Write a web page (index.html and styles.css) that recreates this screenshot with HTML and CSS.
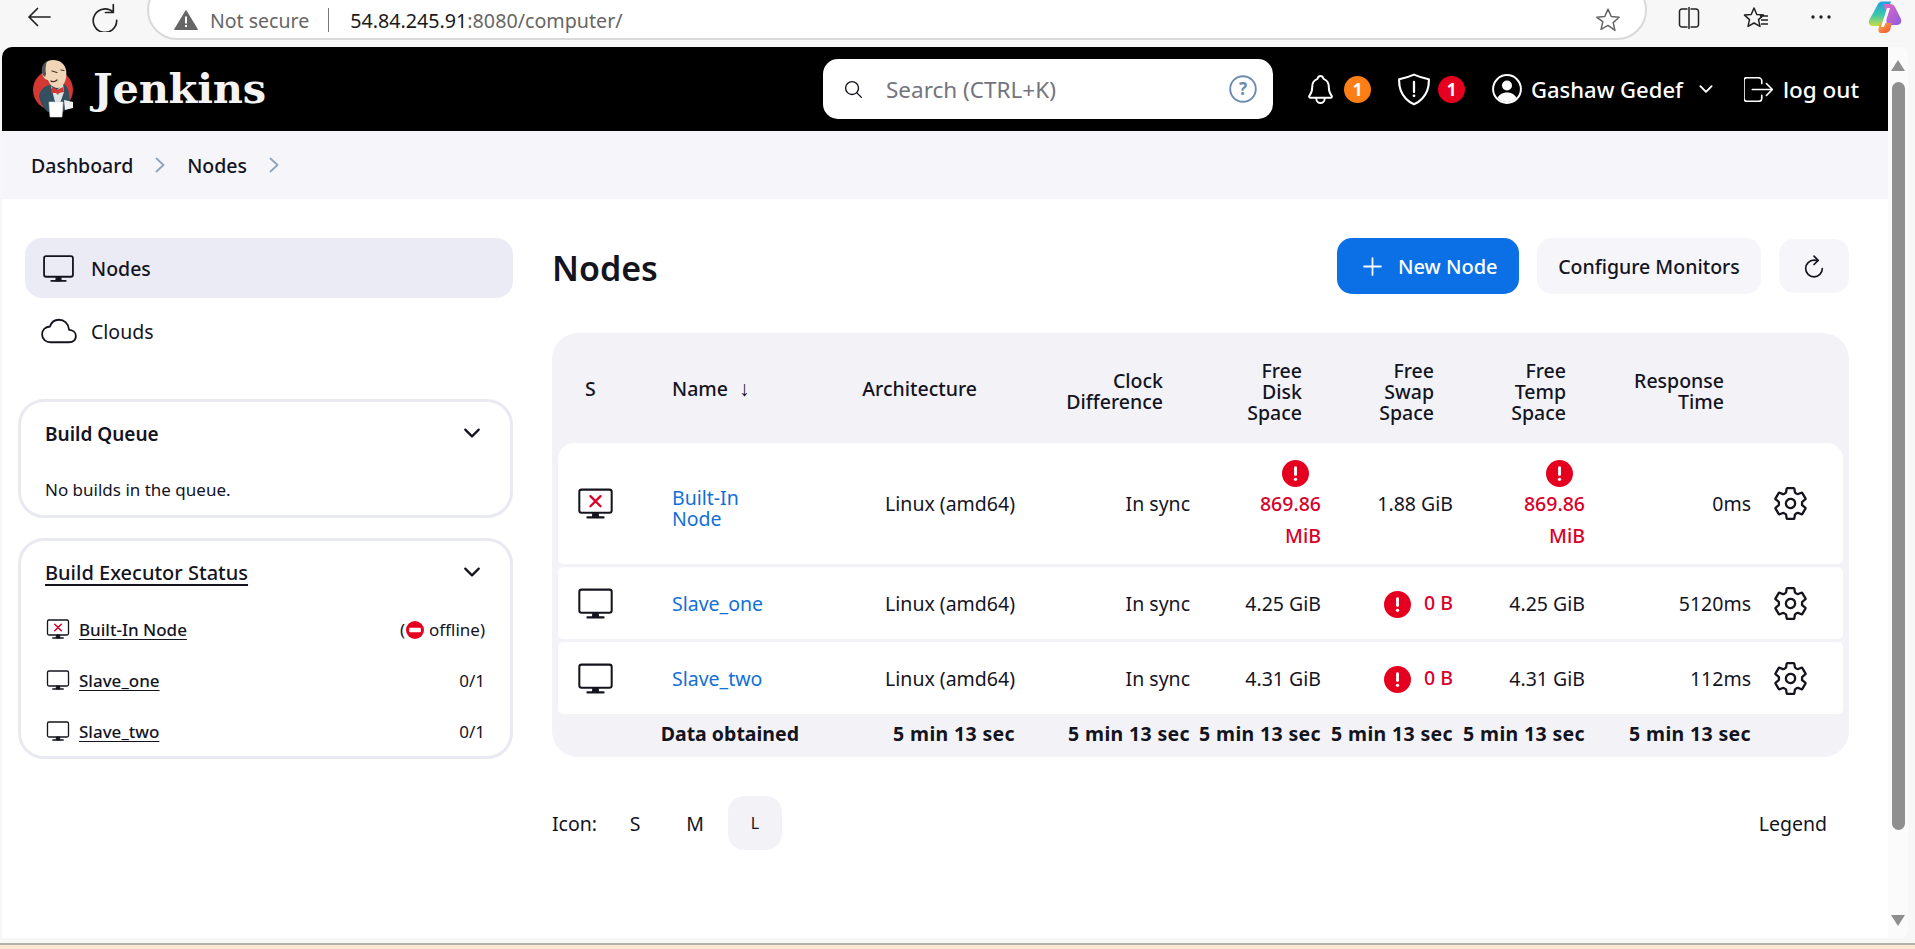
FILE: index.html
```html
<!DOCTYPE html>
<html lang="en">
<head>
<meta charset="utf-8">
<title>Nodes - Jenkins</title>
<link rel="stylesheet" href="styles.css">
</head>
<body>
<svg class="defs" aria-hidden="true">
  <symbol id="monitor" viewBox="0 0 512 512"><rect x="32" y="64" width="448" height="320" rx="32" ry="32" fill="none" stroke="currentColor" stroke-width="28" stroke-linejoin="round"/><path d="M296 448l-6-64h-68l-6 64h80z" fill="currentColor" stroke="currentColor" stroke-width="20" stroke-linejoin="round"/><path d="M368 448H144" fill="none" stroke="currentColor" stroke-width="28" stroke-linecap="round"/></symbol>
  <symbol id="monitor-x" viewBox="0 0 512 512"><rect x="32" y="64" width="448" height="320" rx="32" ry="32" fill="none" stroke="currentColor" stroke-width="28" stroke-linejoin="round"/><path d="M296 448l-6-64h-68l-6 64h80z" fill="currentColor" stroke="currentColor" stroke-width="20" stroke-linejoin="round"/><path d="M368 448H144" fill="none" stroke="currentColor" stroke-width="28" stroke-linecap="round"/><path d="M186 154l140 140M326 154L186 294" fill="none" stroke="#d8002a" stroke-width="32" stroke-linecap="round"/></symbol>
  <symbol id="gear" viewBox="0 0 512 512"><path fill="none" stroke="currentColor" stroke-width="32" stroke-linecap="round" stroke-linejoin="round" d="M262.29 192.31a64 64 0 1057.4 57.4 64.13 64.13 0 00-57.4-57.4zM416.39 256a154.34 154.34 0 01-1.53 20.79l45.21 35.46a10.81 10.81 0 012.45 13.75l-42.77 74a10.81 10.81 0 01-13.14 4.59l-44.9-18.08a16.11 16.11 0 00-15.17 1.75A164.48 164.48 0 01325 400.8a15.94 15.94 0 00-8.82 12.14l-6.73 47.89a11.08 11.08 0 01-10.68 9.17h-85.54a11.11 11.11 0 01-10.69-8.87l-6.72-47.82a16.07 16.07 0 00-9-12.22 155.3 155.3 0 01-21.46-12.57 16 16 0 00-15.11-1.71l-44.89 18.07a10.81 10.81 0 01-13.14-4.58l-42.77-74a10.8 10.8 0 012.45-13.75l38.21-30a16.05 16.05 0 006-14.08c-.36-4.17-.58-8.33-.58-12.5s.21-8.27.58-12.35a16 16 0 00-6.07-13.94l-38.19-30A10.81 10.81 0 0149.48 186l42.77-74a10.81 10.81 0 0113.14-4.59l44.9 18.08a16.11 16.11 0 0015.17-1.75A164.48 164.48 0 01187 111.2a15.94 15.94 0 008.82-12.14l6.73-47.89A11.08 11.08 0 01213.23 42h85.54a11.11 11.11 0 0110.69 8.87l6.72 47.82a16.07 16.07 0 009 12.22 155.3 155.3 0 0121.46 12.57 16 16 0 0015.11 1.71l44.89-18.07a10.81 10.81 0 0113.14 4.58l42.77 74a10.8 10.8 0 01-2.45 13.75l-38.21 30a16.05 16.05 0 00-6.05 14.08c.33 4.14.55 8.3.55 12.47z"/></symbol>
  <symbol id="warn" viewBox="0 0 28 28"><circle cx="14" cy="14" r="14" fill="#e6001f"/><rect x="12.5" y="6.5" width="3" height="10" rx="1.5" fill="#fff"/><circle cx="14" cy="20" r="1.7" fill="#fff"/></symbol>
  <symbol id="chev-down" viewBox="0 0 512 512"><path d="M112 184l144 144 144-144" fill="none" stroke="currentColor" stroke-width="48" stroke-linecap="round" stroke-linejoin="round"/></symbol>
  <symbol id="chev-right" viewBox="0 0 10 16"><path d="M1.5 1.5L8.5 8l-7 6.5" fill="none" stroke="currentColor" stroke-width="1.8" stroke-linecap="round" stroke-linejoin="round"/></symbol>
</svg>

<div class="chrome">
  <svg class="c-back" viewBox="0 0 24 20"><path d="M23 10H2M10.5 1.5L2 10l8.5 8.5" fill="none" stroke="#222" stroke-width="1.7" stroke-linecap="round" stroke-linejoin="round"/></svg>
  <svg class="c-reload" viewBox="0 0 26 26"><path d="M20 1.500v7h-7M20 8.500a10.500 10.500 0 1 0 3 7" fill="none" stroke="#222" stroke-width="1.500" stroke-linecap="round" stroke-linejoin="round"/></svg>
  <div class="address">
    <svg class="a-warn" viewBox="0 0 24 20"><path d="M12 .5L23.5 19.5H.5z" fill="#666" stroke="#666" stroke-linejoin="round"/><rect x="11" y="6.5" width="2" height="7" fill="#fff"/><rect x="11" y="15" width="2" height="2" fill="#fff"/></svg>
    <span class="a-note">Not secure</span>
    <span class="a-sep"></span>
    <span class="a-url">54.84.245.91<span class="a-path">:8080/computer/</span></span>
    <svg class="a-star" viewBox="0 0 24 24"><path d="M12 2l3 6.8 7.3.7-5.5 4.9 1.6 7.2L12 17l-6.4 3.600 1.600-7.200L1.700 9.500 9 8.800z" fill="none" stroke="#666" stroke-width="1.400" stroke-linejoin="round"/></svg>
  </div>
  <svg class="c-split" viewBox="0 0 24 24"><path d="M10.500 3H5a2.500 2.500 0 0 0-2.500 2.500v13A2.500 2.500 0 0 0 5 21h5.500M13.500 3H19a2.500 2.500 0 0 1 2.500 2.500v13A2.500 2.500 0 0 1 19 21h-5.500M12 1v22" fill="none" stroke="#222" stroke-width="1.500"/></svg>
  <svg class="c-fav" viewBox="0 0 26 24"><path d="M11 2l2.800 6.500 6.700.6-5 4.500 1.500 6.800L11 17l-6 3.400 1.500-6.800-5-4.500 6.700-.6zM17 10h8M18 14h7M18 18h7" fill="none" stroke="#222" stroke-width="1.500" stroke-linejoin="round"/></svg>
  <svg class="c-dots" viewBox="0 0 20 4"><circle cx="2" cy="2" r="1.700" fill="#222"/><circle cx="10" cy="2" r="1.700" fill="#222"/><circle cx="18" cy="2" r="1.700" fill="#222"/></svg>
  <svg class="c-copilot" viewBox="0 0 34 32">
    <defs>
      <linearGradient id="cpa" x1="0" y1="0" x2="0" y2="1"><stop offset="0" stop-color="#1f9fe8"/><stop offset=".55" stop-color="#3cc7a8"/><stop offset="1" stop-color="#c8dc46"/></linearGradient>
      <linearGradient id="cpb" x1="0" y1="0" x2="1" y2="1"><stop offset="0" stop-color="#e868c0"/><stop offset="1" stop-color="#8a5ce0"/></linearGradient>
      <linearGradient id="cpc" x1="0" y1="0" x2="1" y2="1"><stop offset="0" stop-color="#f9b53c"/><stop offset="1" stop-color="#f0483c"/></linearGradient>
    </defs>
    <path d="M10 3c1-2 3-2.500 5-2.500h8l-7 22c-.5 1.500-2 2.500-4 2.500H5c-3 0-5-2.500-4-5.500z" fill="url(#cpa)"/>
    <path d="M16 3h6c2.500 0 4 1 5 3l6 12c1 3-1 6-4 6h-10z" fill="url(#cpb)"/>
    <path d="M12 22h12l-2 7c-1 2-3 3-5 3h-4c-2 0-3-2-2.500-4z" fill="url(#cpc)"/>
    <path d="M22 7h-3l-6 19h3z" fill="#fff"/>
  </svg>
</div>

<div class="window">
  <div class="page">
    <header class="topbar">
      <svg class="logo" viewBox="0 0 41 58">
        <circle cx="20" cy="30" r="20" fill="#d33833"/>
        <path d="M6 36c1-6 5-10 11-11l14-1c3 2 5 6 5 11l1 6-4 8-3 3H15c-5-4-8-10-9-16z" fill="#335061"/>
        <path d="M18 26l5 5 7-7 1 8-5 14h-3z" fill="#dfe3e6"/>
        <path d="M19 27l5 3 6-3 1 5-5 1-1 2-2-2h-5z" fill="#d33833"/>
        <path d="M9 11C9 4 14 0 20 0c7 0 12 4 13 10 1 5 0 11-3 15-2 3-6 4-9 2-3-1-5-4-6-7-3 0-6-4-6-9z" fill="#f0d6b7"/>
        <path d="M9 13c-1-5 1-9 5-12-1 3-2 8-1 13l-1 3c-1-1-2-2-3-4z" fill="#4f5358"/>
        <path d="M19 11l5 1.500M28 10l3 .5M24 20c-2 2-5 2-6 1" fill="none" stroke="#49352a" stroke-width="1.200" stroke-linecap="round"/>
        <path d="M16 42h14l-1 15H17z" fill="#fff" stroke="#dcdcdc" stroke-width=".6"/>
        <path d="M31 40l9 2v6l-8 2z" fill="#f0f0f0"/>
      </svg>
      <span class="brand">Jenkins</span>
      <div class="search">
        <svg class="search-icon" viewBox="0 0 512 512"><path d="M221.090 64a157.090 157.090 0 10157.090 157.090A157.100 157.100 0 00221.090 64z" fill="none" stroke="#14141f" stroke-width="34"/><path d="M338.290 338.290L448 448" fill="none" stroke="#14141f" stroke-width="34" stroke-linecap="round"/></svg>
        <span class="search-text">Search (CTRL+K)</span>
        <svg class="help-icon" viewBox="0 0 28 28"><circle cx="14" cy="14" r="12.800" fill="none" stroke="#6b8cb0" stroke-width="1.900"/><text x="14" y="20" text-anchor="middle" class="help-q">?</text></svg>
      </div>
      <svg class="bell" viewBox="48 32 416 448"><path d="M427.680 351.430C402 320 383.870 304 383.870 217.350 383.870 138 343.350 109.730 310 96c-4.430-1.820-8.600-6-9.950-10.550C294.200 65.540 277.800 48 256 48s-38.210 17.550-44 37.470c-1.350 4.600-5.520 8.710-9.950 10.530-33.390 13.750-73.870 41.920-73.870 121.350C128.130 304 110 320 84.320 351.430 73.680 364.450 83 384 101.610 384h308.880c18.510 0 27.770-19.610 17.190-32.570zM320 384v16a64 64 0 01-128 0v-16" fill="none" stroke="#fff" stroke-width="30" stroke-linecap="round" stroke-linejoin="round"/></svg>
      <span class="badge badge-orange">1</span>
      <svg class="shield" viewBox="32 32 448 448"><path d="M463.100 112.370C373.680 96.330 336.710 84.450 256 48c-80.710 36.450-117.680 48.330-207.100 64.370C32.700 369.130 240.580 457.790 256 464c15.420-6.210 223.300-94.870 207.100-351.630z" fill="none" stroke="#fff" stroke-width="30" stroke-linejoin="round"/><path d="M256 150v140" stroke="#fff" stroke-width="32" stroke-linecap="round"/><circle cx="256" cy="345" r="20" fill="#fff"/></svg>
      <span class="badge badge-red">1</span>
      <svg class="user-icon" viewBox="0 0 30 30"><circle cx="15" cy="15" r="13.900" fill="none" stroke="#fff" stroke-width="2"/><circle cx="15" cy="11.500" r="5" fill="#fff"/><path d="M5.500 24c2-4 5.500-5.500 9.500-5.500s7.500 1.500 9.500 5.500c-2.500 2.500-6 4-9.500 4s-7-1.500-9.500-4z" fill="#fff"/></svg>
      <span class="user-name">Gashaw Gedef</span>
      <svg class="user-chev"><use href="#chev-down"/></svg>
      <svg class="logout-icon" viewBox="64 96 392 320"><path d="M304 336v40a40 40 0 01-40 40H104a40 40 0 01-40-40V136a40 40 0 0140-40h152c22.090 0 48 17.910 48 40v40M368 336l80-80-80-80M176 256h256" fill="none" stroke="#fff" stroke-width="22" stroke-linecap="round" stroke-linejoin="round"/></svg>
      <span class="logout-text">log out</span>
    </header>

    <nav class="crumbs">
      <span class="crumb">Dashboard</span>
      <svg class="crumb-sep"><use href="#chev-right"/></svg>
      <span class="crumb">Nodes</span>
      <svg class="crumb-sep"><use href="#chev-right"/></svg>
    </nav>

    <div class="layout">
      <aside class="side">
        <div class="side-item side-item-active">
          <svg class="side-icon"><use href="#monitor"/></svg><span>Nodes</span>
        </div>
        <div class="side-item">
          <svg class="side-icon side-icon-cloud" viewBox="0 0 512 512"><path d="M400 240c-8.890-89.540-71-144-144-144-69 0-113.440 48.200-128 96C68 198 16 235.590 16 304c0 66 54 112 120 112h260c55 0 100-27.440 100-88 0-59.820-53-85.760-96-88z" fill="none" stroke="currentColor" stroke-width="26" stroke-linejoin="round"/></svg><span>Clouds</span>
        </div>

        <section class="card card-queue">
          <div class="card-head"><span class="card-title">Build Queue</span><svg class="card-chev"><use href="#chev-down"/></svg></div>
          <p class="card-empty">No builds in the queue.</p>
        </section>

        <section class="card">
          <div class="card-head"><span class="card-title card-title-link">Build Executor Status</span><svg class="card-chev"><use href="#chev-down"/></svg></div>
          <ul class="exec-list">
            <li class="exec-row"><svg class="exec-icon"><use href="#monitor-x"/></svg><span class="exec-name">Built-In Node</span><span class="exec-state">(<svg class="offline-icon" viewBox="0 0 20 20"><circle cx="10" cy="10" r="10" fill="#e6001f"/><rect x="3.500" y="7.500" width="13" height="5" rx="1" fill="#fff"/></svg> offline)</span></li>
            <li class="exec-row"><svg class="exec-icon"><use href="#monitor"/></svg><span class="exec-name">Slave_one</span><span class="exec-state">0/1</span></li>
            <li class="exec-row"><svg class="exec-icon"><use href="#monitor"/></svg><span class="exec-name">Slave_two</span><span class="exec-state">0/1</span></li>
          </ul>
        </section>
      </aside>

      <main class="content">
        <div class="title-row">
          <h1 class="title">Nodes</h1>
          <div class="actions">
            <span class="btn btn-primary"><svg class="plus" viewBox="0 0 18 18"><path d="M9 1v16M1 9h16" stroke="#fff" stroke-width="1.700" stroke-linecap="round"/></svg>New Node</span>
            <span class="btn btn-soft">Configure Monitors</span>
            <span class="btn btn-soft btn-icon"><svg class="refresh" viewBox="64 40 384 432"><path d="M320 146s24.360-12-64-12a160 160 0 10160 160" fill="none" stroke="#14141f" stroke-width="32" stroke-linecap="round"/><path d="M256 58l80 80-80 80" fill="none" stroke="#14141f" stroke-width="32" stroke-linecap="round" stroke-linejoin="round"/></svg></span>
          </div>
        </div>

        <div class="table-wrap">
          <table class="nodes">
            <colgroup>
              <col class="c1"><col class="c2"><col class="c3"><col class="c4"><col class="c5"><col class="c6"><col class="c7"><col class="c8"><col class="c9">
            </colgroup>
            <thead>
              <tr>
                <th class="th-s">S</th>
                <th class="th-name">Name <span class="arrow">↓</span></th>
                <th class="pad-37">Architecture</th>
                <th class="pad-27">Clock<br>Difference</th>
                <th class="pad-19">Free<br>Disk<br>Space</th>
                <th class="pad-19">Free<br>Swap<br>Space</th>
                <th class="pad-19">Free<br>Temp<br>Space</th>
                <th class="pad-27">Response<br>Time</th>
                <th></th>
              </tr>
            </thead>
            <tbody>
              <tr class="row-tall">
                <td class="td-icon"><svg class="node-icon"><use href="#monitor-x"/></svg></td>
                <td class="td-name"><span class="node-link node-link-wrap">Built-In Node</span></td>
                <td>Linux (amd64)</td>
                <td>In sync</td>
                <td class="warn warn-wrap"><svg class="warn-icon"><use href="#warn"/></svg> 869.86 MiB</td>
                <td>1.88 GiB</td>
                <td class="warn warn-wrap"><svg class="warn-icon"><use href="#warn"/></svg> 869.86 MiB</td>
                <td>0ms</td>
                <td class="td-gear"><svg class="gear"><use href="#gear"/></svg></td>
              </tr>
              <tr>
                <td class="td-icon"><svg class="node-icon"><use href="#monitor"/></svg></td>
                <td class="td-name"><span class="node-link">Slave_one</span></td>
                <td>Linux (amd64)</td>
                <td>In sync</td>
                <td>4.25 GiB</td>
                <td class="warn"><svg class="warn-icon"><use href="#warn"/></svg> 0 B</td>
                <td>4.25 GiB</td>
                <td>5120ms</td>
                <td class="td-gear"><svg class="gear"><use href="#gear"/></svg></td>
              </tr>
              <tr>
                <td class="td-icon"><svg class="node-icon"><use href="#monitor"/></svg></td>
                <td class="td-name"><span class="node-link">Slave_two</span></td>
                <td>Linux (amd64)</td>
                <td>In sync</td>
                <td>4.31 GiB</td>
                <td class="warn"><svg class="warn-icon"><use href="#warn"/></svg> 0 B</td>
                <td>4.31 GiB</td>
                <td>112ms</td>
                <td class="td-gear"><svg class="gear"><use href="#gear"/></svg></td>
              </tr>
            </tbody>
            <tfoot>
              <tr>
                <th colspan="2" class="tf-label">Data obtained</th>
                <th>5 min 13 sec</th>
                <th>5 min 13 sec</th>
                <th>5 min 13 sec</th>
                <th>5 min 13 sec</th>
                <th>5 min 13 sec</th>
                <th>5 min 13 sec</th>
                <th></th>
              </tr>
            </tfoot>
          </table>
        </div>

        <div class="bottom-row">
          <div class="sizes">
            <span class="sizes-label">Icon:</span>
            <span class="size">S</span>
            <span class="size">M</span>
            <span class="size size-active">L</span>
          </div>
          <span class="legend">Legend</span>
        </div>
      </main>
    </div>
  </div>

  <div class="scrollbar">
    <span class="sb-up"></span>
    <span class="sb-thumb"></span>
    <span class="sb-down"></span>
  </div>
</div>
<div class="task-edge"></div>
</body>
</html>
```
FILE: styles.css
```css
* { box-sizing: border-box; }
html, body { margin: 0; padding: 0; }
body {
  width: 1915px;
  height: 949px;
  overflow: hidden;
  background: #f7f7f7;
  color: #14141f;
  font-family: "Noto Sans", "Open Sans", "Liberation Sans", sans-serif;
  font-size: 20px;
  display: flex;
  flex-direction: column;
}
.defs { position: absolute; width: 0; height: 0; }

/* browser chrome */
.chrome { height: 47px; flex: none; display: flex; align-items: flex-start; overflow: hidden; }
.c-back { width: 24px; height: 20px; margin: 7px 0 0 27px; flex: none; }
.c-reload { width: 29px; height: 29px; margin: 3px 0 0 40px; flex: none; }
.address {
  width: 1500px; height: 60px; margin: -20px 0 0 27px; flex: none;
  background: #fff; border: 2px solid #d9d9d9; border-radius: 30px;
  display: flex; align-items: center; padding: 20px 0 0 25px; color: #666;
}
.a-warn { width: 24px; height: 20px; flex: none; }
.a-note { margin-left: 12px; font-size: 19.5px; }
.a-sep { width: 1px; height: 24px; background: #777; margin-left: 19px; }
.a-url { margin-left: 21px; font-size: 19.7px; color: #1a1a1a; }
.a-path { color: #666; }
.a-star { width: 26px; height: 26px; margin-left: auto; margin-right: 24px; flex: none; }
.c-split { width: 24px; height: 24px; margin: 6px 0 0 30px; flex: none; }
.c-fav { width: 26px; height: 24px; margin: 6px 0 0 42px; flex: none; }
.c-dots { width: 20px; height: 4px; margin: 15px 0 0 42px; flex: none; }
.c-copilot { width: 34px; height: 32px; margin: 1px 0 0 37px; flex: none; }

.window { height: 891px; flex: none; display: flex; margin-left: 2px; width: 1906px; }
.page { width: 1886px; background: #fff; border-top-left-radius: 10px; overflow: hidden; }
.task-edge { flex: 1; margin-top: 5px; background: #fbe6d3; border-top: 2px solid #b4b0ac; }

/* scrollbar */
.scrollbar {
  width: 20px; background: #fbfbfb; position: relative;
  border-top-right-radius: 8px; border-bottom-right-radius: 8px;
  display: flex; flex-direction: column; align-items: center;
}
.sb-up, .sb-down { width: 0; height: 0; border-left: 7px solid transparent; border-right: 7px solid transparent; }
.sb-up { border-bottom: 11px solid #8f8f8f; margin-top: 13px; }
.sb-thumb { width: 13px; height: 748px; margin-top: 11px; background: #8f8f8f; border-radius: 7px; }
.sb-down { border-top: 11px solid #8f8f8f; margin-top: 85px; }

/* top bar */
.topbar { height: 84px; background: #000; display: flex; align-items: center; color: #fff; }
.logo { width: 41px; height: 58px; margin: 0 0 0 31px; flex: none; }
.brand { font-family: "DejaVu Serif", "Liberation Serif", serif; font-weight: 700; font-size: 41.5px; margin-left: 19px; letter-spacing: -.2px; color: #f4f4f4; width: 730px; flex: none; padding-bottom: 2px; }
.search {
  width: 450px; height: 60px; flex: none; background: #fff; border-radius: 15px;
  display: flex; align-items: center; padding: 0 16px 0 20px;
}
.search-icon { width: 21px; height: 21px; flex: none; }
.search-text { color: #74747c; margin-left: 22px; font-size: 22.5px; flex: 1; padding-top: 1px; }
.help-icon { width: 28px; height: 28px; flex: none; }
.help-q { font-size: 17px; font-weight: 700; fill: #6b8cb0; }
.bell { width: 27px; height: 31px; margin-left: 34px; flex: none; }
.badge { width: 27px; height: 27px; border-radius: 50%; display: flex; align-items: center; justify-content: center; font-size: 17px; font-weight: 700; color: #fff; flex: none; margin-left: 10px; }
.badge-orange { background: #fd7e14; }
.badge-red { background: #e6001f; margin-left: 8px; }
.shield { width: 32px; height: 33px; margin-left: 27px; flex: none; }
.user-icon { width: 30px; height: 30px; margin-left: 27px; flex: none; }
.user-name { margin-left: 9px; font-size: 22px; font-weight: 500; width: 162px; flex: none; }
.user-chev { width: 20px; height: 20px; margin-left: 3px; color: #fff; flex: none; }
.logout-icon { width: 29px; height: 25px; margin-left: 28px; flex: none; }
.logout-text { margin-left: 10px; font-size: 22.5px; font-weight: 500; }

/* breadcrumb */
.crumbs { height: 68px; background: #f5f5fa; display: flex; align-items: center; padding-left: 29px; }
.crumb { font-weight: 500; font-size: 19.5px; }
.crumb-sep { width: 10px; height: 16px; margin: 0 22px; color: #8fa3ba; flex: none; }

/* layout */
.layout { display: flex; padding: 39px 39px 0 16px; gap: 39px; }
.side { width: 495px; flex: none; }
.content { flex: 1; min-width: 0; }

.side-item {
  height: 60px; margin: 0 0 3px 7px; padding-left: 17px; border-radius: 17px;
  display: flex; align-items: center; font-size: 19.5px;
}
.side-item-active { background: #ebebf5; font-weight: 500; }
.side-icon { width: 33px; height: 33px; margin-right: 16px; flex: none; }
.side-icon-cloud { width: 36px; height: 36px; margin-left: -1px; margin-right: 14px; }

.card { border: 3px solid #e9e9f2; border-radius: 26px; padding: 18px 27px 9px 24px; margin-top: 20px; }
.card-queue { margin-top: 38px; padding-bottom: 13px; }
.card-head { height: 28px; display: flex; justify-content: space-between; align-items: center; }
.card-title { font-size: 19px; font-weight: 600; line-height: 28px; }
.card-title-link { font-size: 20px; font-weight: 500; text-decoration: underline; text-underline-offset: 4px; text-decoration-thickness: 2px; }
.card-chev { width: 24px; height: 24px; margin: -3px -1px 0 0; flex: none; }
.card-empty { margin: 30px 0 0; font-size: 17px; line-height: 24px; }
.exec-list { list-style: none; margin: 27px -2px 0 0; padding: 0 0 1px; display: flex; flex-direction: column; gap: 21px; }
.exec-row { height: 30px; display: flex; align-items: center; }
.exec-icon { width: 24px; height: 24px; margin-right: 9px; flex: none; margin-left: 1px; }
.exec-name { font-size: 17px; font-weight: 500; text-decoration: underline; text-underline-offset: 3px; }
.exec-state { margin-left: auto; font-size: 17px; display: flex; align-items: center; }
.offline-icon { width: 18px; height: 18px; margin: 2px 5px 0 1px; }

/* title row */
.title-row { display: flex; justify-content: space-between; height: 56px; }
.title { margin: 0; font-size: 34px; font-weight: 600; line-height: 60px; }
.actions { display: flex; gap: 18px; }
.btn { height: 56px; border-radius: 15px; display: flex; align-items: center; font-size: 20px; font-weight: 500; }
.btn-primary { width: 182px; background: #0b70e6; color: #fff; padding-left: 26px; }
.plus { width: 19px; height: 19px; margin-right: 16px; flex: none; }
.btn-soft { background: #f5f5fa; width: 224px; justify-content: center; font-size: 19.5px; }
.btn-icon { width: 70px; height: 54px; margin-top: 1px; }
.refresh { width: 20px; height: 23px; }

/* table */
.table-wrap { margin-top: 39px; background: #f2f2f7; border-radius: 26px; padding: 0 6px; }
.nodes { width: 100%; table-layout: fixed; border-collapse: separate; border-spacing: 0 3px; font-size: 19.5px; }
.c1 { width: 114px; } .c2 { width: 134px; } .c3 { width: 217px; } .c4 { width: 175px; }
.c5 { width: 131px; } .c6 { width: 132px; } .c7 { width: 132px; } .c8 { width: 166px; } .c9 { width: 84px; }
.nodes th, .nodes td { padding: 0 8px 0 0; text-align: right; }
.nodes thead th { height: 104px; padding-top: 7px; line-height: 21px; font-weight: 500; }
.nodes thead .th-s { text-align: left; padding-left: 27px; padding-top: 0; }
.nodes thead .th-name { text-align: left; padding-top: 0; }
.nodes thead .pad-37 { padding-right: 46px; padding-top: 0; }
.nodes thead .pad-27 { padding-right: 35px; padding-top: 5px; }
.nodes thead .pad-19 { padding-right: 27px; }
.arrow { font-weight: 400; font-size: 21px; margin-left: 6px; }
.nodes tbody td { height: 72px; background: #fff; }
.nodes tbody .row-tall td { height: 121px; }
.nodes tbody td:first-child { border-radius: 5px 0 0 5px; }
.nodes tbody td:last-child { border-radius: 0 5px 5px 0; }
.nodes tbody .row-tall td:first-child { border-top-left-radius: 16px; }
.nodes tbody .row-tall td:last-child { border-top-right-radius: 16px; }
.nodes .td-icon { text-align: left; padding-left: 19px; }
.nodes .td-name { text-align: left; }
.node-icon { width: 37px; height: 37px; display: block; }
.node-link { color: #1170d6; }
.node-link-wrap { display: inline-block; max-width: 100px; line-height: 21px; padding-top: 11px; }
.nodes .warn { color: #d8002a; font-weight: 500; padding-left: 44px; line-height: 32px; }
.warn-icon { width: 27px; height: 27px; vertical-align: middle; margin-right: 8px; }
.warn-wrap .warn-icon { margin-right: 12px; }
.nodes .td-gear { text-align: left; padding-left: 13px; }
.gear { width: 37px; height: 37px; display: block; }
.nodes tfoot th { height: 37px; padding-bottom: 3px; font-weight: 700; line-height: 26px; white-space: nowrap; font-size: 19.5px; letter-spacing: .35px; }
.nodes tfoot .tf-label { letter-spacing: 0; padding-right: 7px; }

/* bottom */
.bottom-row { margin-top: 39px; display: flex; justify-content: space-between; align-items: center; padding-right: 22px; }
.sizes { display: flex; align-items: center; gap: 6px; }
.sizes-label { font-size: 19.5px; margin-right: 5px; }
.size { width: 54px; height: 54px; border-radius: 16px; display: flex; align-items: center; justify-content: center; font-size: 19.5px; }
.size-active { background: #f2f2f7; font-size: 16px; }
.legend { font-size: 19.5px; }
```
